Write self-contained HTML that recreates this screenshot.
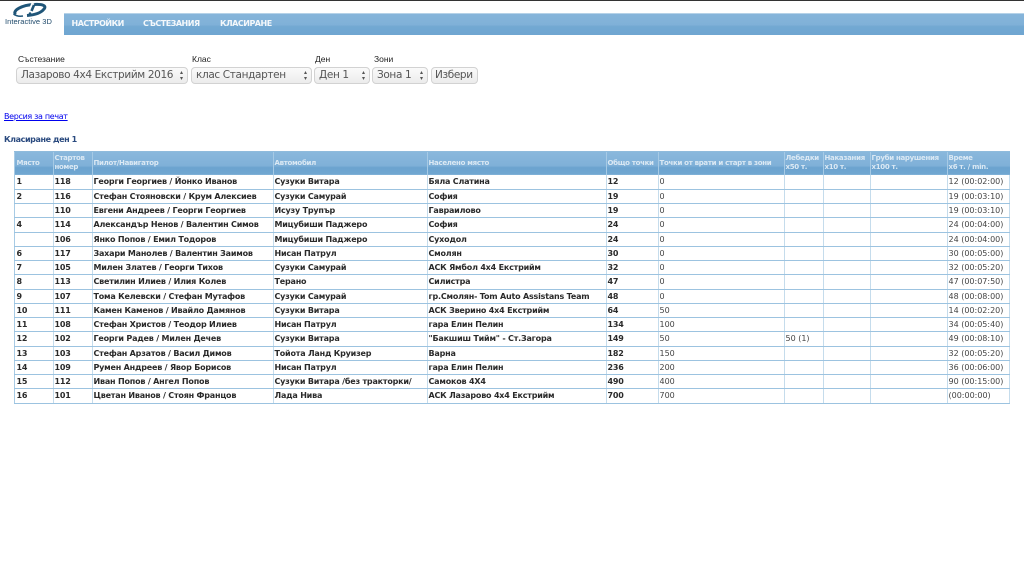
<!DOCTYPE html>
<html><head><meta charset="utf-8">
<style>
html,body{margin:0;padding:0;background:#fff;width:1024px;height:576px;overflow:hidden;font-family:"DejaVu Sans",sans-serif;}
#wrap{position:absolute;left:0;top:0;width:1024px;height:576px;filter:blur(0.35px);}
.abs{position:absolute;}
#top{left:0;top:0;width:1024px;height:1px;background:#333;}
#nav{left:64px;top:13px;width:960px;height:22px;background:linear-gradient(#86b5da 0,#80b1d8 50%,#72a8d2 60%,#6fa6d1 100%);border-top:1px solid #b5d2e8;box-sizing:border-box;}
#nav span{position:absolute;top:5px;font:bold 8px "DejaVu Sans",sans-serif;letter-spacing:-.5px;color:#f4f8fb;white-space:nowrap;}
.lbl{font:8.5px "Liberation Sans",sans-serif;color:#222;white-space:nowrap;}
.sel{position:absolute;top:67px;height:17px;box-sizing:border-box;border:1px solid #d2d2d2;border-radius:4px;background:linear-gradient(#fafafa,#ececec);font:10.5px "DejaVu Sans",sans-serif;letter-spacing:-.36px;color:#555;line-height:15px;padding-left:4px;white-space:nowrap;}
.sel i{position:absolute;right:3px;top:2px;width:5px;height:11px;font:normal 6px/5.5px "DejaVu Sans",sans-serif;color:#555;text-align:center;letter-spacing:0;}
table{position:absolute;left:13.5px;top:150.5px;width:995.5px;border-collapse:collapse;table-layout:fixed;font:bold 8px "DejaVu Sans",sans-serif;letter-spacing:-.2px;color:#2a2a2a;}
th{height:24px;padding:0 0 0 1px;box-sizing:border-box;text-align:left;font:bold 7px/9.5px "DejaVu Sans",sans-serif;letter-spacing:-.3px;color:#dbe9f4;background:linear-gradient(#8ab8dc 0,#7fb0d8 62%,#6ba3cf 70%,#71a7d1 100%);border-left:1px solid #a6cae5;border-top:1px solid #8fbbdc;overflow:hidden;white-space:nowrap;}
td{height:14.25px;padding:0 0 0 1px;box-sizing:border-box;border:1px solid #c5dcec;border-top:0;border-bottom:1px solid #9cc3e0;white-space:nowrap;overflow:hidden;line-height:13px;}
td.n{font-weight:normal;color:#444;font-size:8px;letter-spacing:0;}
td:first-child,th:first-child{border-left:1px solid #a8cbe5;padding-left:2px;}
</style></head><body><div id="wrap">
<div class="abs" id="top"></div>
<svg class="abs" style="left:10px;top:1px" width="40" height="17" viewBox="0 0 40 17">
<path d="M5.5 13.5 C2 9.5 12 4 24 3.5 C32 3 37 4.5 34 8 C31 12 24 14 17 14.5" fill="none" stroke="#1f5578" stroke-width="3"/>
<path d="M3.5 13 C6 15 10 15.5 13 15" fill="none" stroke="#1f5578" stroke-width="1.5"/>
<path d="M23 2 L19 12" stroke="#fff" stroke-width="3"/>
<path d="M24 4 L21.5 10" stroke="#1f5578" stroke-width="2.6"/>
<circle cx="20" cy="12.6" r="1.3" fill="#1f5578"/>
</svg>
<div class="abs" style="left:5px;top:17px;font:7.5px 'Liberation Sans',sans-serif;letter-spacing:.05px;color:#1f4a6b;white-space:nowrap">Interactive 3D</div>
<div class="abs" id="nav"><span style="left:7.5px">НАСТРОЙКИ</span><span style="left:79px">СЪСТЕЗАНИЯ</span><span style="left:156px">КЛАСИРАНЕ</span></div>
<div class="abs lbl" style="left:18px;top:54px">Състезание</div>
<div class="abs lbl" style="left:192px;top:54px">Клас</div>
<div class="abs lbl" style="left:315px;top:54px">Ден</div>
<div class="abs lbl" style="left:374px;top:54px">Зони</div>
<div class="sel" style="left:16px;width:172px">Лазарово 4x4 Екстрийм 2016<i>▴<br>▾</i></div>
<div class="sel" style="left:191px;width:121px">клас Стандартен<i>▴<br>▾</i></div>
<div class="sel" style="left:314px;width:56px">Ден 1<i>▴<br>▾</i></div>
<div class="sel" style="left:372px;width:56px">Зона 1<i>▴<br>▾</i></div>
<div class="sel" style="left:431px;width:47px;padding-left:3px">Избери</div>
<a class="abs" href="#" style="left:4px;top:112px;font:8px 'DejaVu Sans',sans-serif;letter-spacing:-.33px;color:#00e;text-decoration:underline;white-space:nowrap">Версия за печат</a>
<div class="abs" style="left:4px;top:135px;font:bold 8px 'DejaVu Sans',sans-serif;letter-spacing:-.4px;color:#2a4a7f;white-space:nowrap">Класиране ден 1</div>
<table>
<colgroup><col style="width:39px"><col style="width:39px"><col style="width:181px"><col style="width:154px"><col style="width:179px"><col style="width:52px"><col style="width:126px"><col style="width:39px"><col style="width:47px"><col style="width:77px"><col style="width:62.5px"></colgroup>
<tr><th>Място</th><th>Стартов<br>номер</th><th>Пилот/Навигатор</th><th>Автомобил</th><th>Населено място</th><th>Общо точки</th><th>Точки от врати и старт в зони</th><th>Лебедки<br>x50 т.</th><th>Наказания<br>x10 т.</th><th>Груби нарушения<br>x100 т.</th><th>Време<br>x6 т. / min.</th></tr>
<tr><td>1</td><td>118</td><td>Георги Георгиев / Йонко Иванов</td><td>Сузуки Витара</td><td>Бяла Слатина</td><td>12</td><td class="n">0</td><td></td><td></td><td></td><td class="n">12 (00:02:00)</td></tr>
<tr><td>2</td><td>116</td><td>Стефан Стояновски / Крум Алексиев</td><td>Сузуки Самурай</td><td>София</td><td>19</td><td class="n">0</td><td></td><td></td><td></td><td class="n">19 (00:03:10)</td></tr>
<tr><td></td><td>110</td><td>Евгени Андреев / Георги Георгиев</td><td>Исузу Трупър</td><td>Гавраилово</td><td>19</td><td class="n">0</td><td></td><td></td><td></td><td class="n">19 (00:03:10)</td></tr>
<tr><td>4</td><td>114</td><td>Александър Ненов / Валентин Симов</td><td>Мицубиши Паджеро</td><td>София</td><td>24</td><td class="n">0</td><td></td><td></td><td></td><td class="n">24 (00:04:00)</td></tr>
<tr><td></td><td>106</td><td>Янко Попов / Емил Тодоров</td><td>Мицубиши Паджеро</td><td>Суходол</td><td>24</td><td class="n">0</td><td></td><td></td><td></td><td class="n">24 (00:04:00)</td></tr>
<tr><td>6</td><td>117</td><td>Захари Манолев / Валентин Заимов</td><td>Нисан Патрул</td><td>Смолян</td><td>30</td><td class="n">0</td><td></td><td></td><td></td><td class="n">30 (00:05:00)</td></tr>
<tr><td>7</td><td>105</td><td>Милен Златев / Георги Тихов</td><td>Сузуки Самурай</td><td>АСК Ямбол 4х4 Екстрийм</td><td>32</td><td class="n">0</td><td></td><td></td><td></td><td class="n">32 (00:05:20)</td></tr>
<tr><td>8</td><td>113</td><td>Светилин Илиев / Илия Колев</td><td>Терано</td><td>Силистра</td><td>47</td><td class="n">0</td><td></td><td></td><td></td><td class="n">47 (00:07:50)</td></tr>
<tr><td>9</td><td>107</td><td>Тома Келевски / Стефан Мутафов</td><td>Сузуки Самурай</td><td>гр.Смолян- Tom Auto Assistans Team</td><td>48</td><td class="n">0</td><td></td><td></td><td></td><td class="n">48 (00:08:00)</td></tr>
<tr><td>10</td><td>111</td><td>Камен Каменов / Ивайло Дамянов</td><td>Сузуки Витара</td><td>АСК Зверино 4х4 Екстрийм</td><td>64</td><td class="n">50</td><td></td><td></td><td></td><td class="n">14 (00:02:20)</td></tr>
<tr><td>11</td><td>108</td><td>Стефан Христов / Теодор Илиев</td><td>Нисан Патрул</td><td>гара Елин Пелин</td><td>134</td><td class="n">100</td><td></td><td></td><td></td><td class="n">34 (00:05:40)</td></tr>
<tr><td>12</td><td>102</td><td>Георги Радев / Милен Дечев</td><td>Сузуки Витара</td><td>"Бакшиш Тийм" - Ст.Загора</td><td>149</td><td class="n">50</td><td class="n">50 (1)</td><td></td><td></td><td class="n">49 (00:08:10)</td></tr>
<tr><td>13</td><td>103</td><td>Стефан Арзатов / Васил Димов</td><td>Тойота Ланд Круизер</td><td>Варна</td><td>182</td><td class="n">150</td><td></td><td></td><td></td><td class="n">32 (00:05:20)</td></tr>
<tr><td>14</td><td>109</td><td>Румен Андреев / Явор Борисов</td><td>Нисан Патрул</td><td>гара Елин Пелин</td><td>236</td><td class="n">200</td><td></td><td></td><td></td><td class="n">36 (00:06:00)</td></tr>
<tr><td>15</td><td>112</td><td>Иван Попов / Ангел Попов</td><td>Сузуки Витара /без тракторки/</td><td>Самоков 4Х4</td><td>490</td><td class="n">400</td><td></td><td></td><td></td><td class="n">90 (00:15:00)</td></tr>
<tr><td>16</td><td>101</td><td>Цветан Иванов / Стоян Францов</td><td>Лада Нива</td><td>АСК Лазарово 4х4 Екстрийм</td><td>700</td><td class="n">700</td><td></td><td></td><td></td><td class="n">(00:00:00)</td></tr>
</table>
</div></body></html>
